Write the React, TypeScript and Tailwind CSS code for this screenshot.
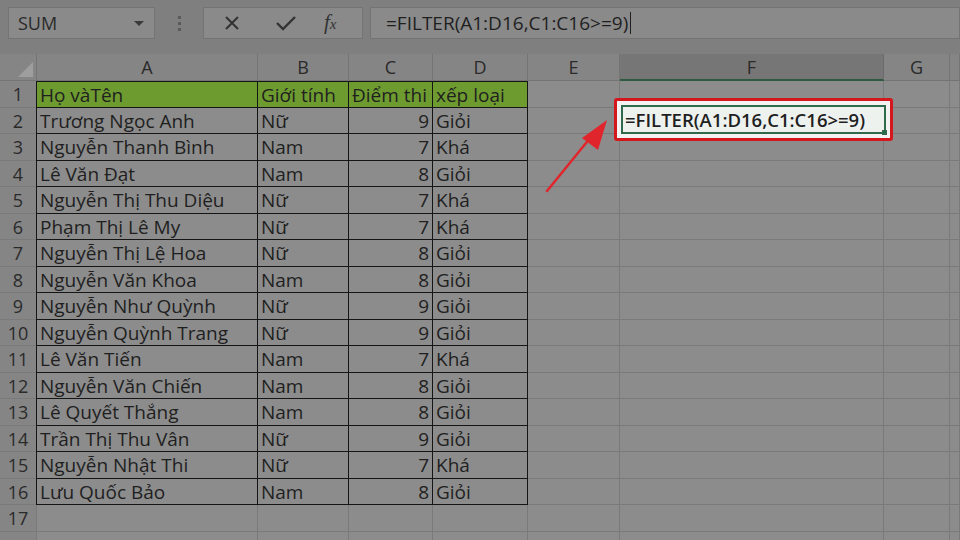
import React from 'react';

const rows = [
  ['Trương Ngọc Anh', 'Nữ', '9', 'Giỏi'],
  ['Nguyễn Thanh Bình', 'Nam', '7', 'Khá'],
  ['Lê Văn Đạt', 'Nam', '8', 'Giỏi'],
  ['Nguyễn Thị Thu Diệu', 'Nữ', '7', 'Khá'],
  ['Phạm Thị Lê My', 'Nữ', '7', 'Khá'],
  ['Nguyễn Thị Lệ Hoa', 'Nữ', '8', 'Giỏi'],
  ['Nguyễn Văn Khoa', 'Nam', '8', 'Giỏi'],
  ['Nguyễn Như Quỳnh', 'Nữ', '9', 'Giỏi'],
  ['Nguyễn Quỳnh Trang', 'Nữ', '9', 'Giỏi'],
  ['Lê Văn Tiến', 'Nam', '7', 'Khá'],
  ['Nguyễn Văn Chiến', 'Nam', '8', 'Giỏi'],
  ['Lê Quyết Thắng', 'Nam', '8', 'Giỏi'],
  ['Trần Thị Thu Vân', 'Nữ', '9', 'Giỏi'],
  ['Nguyễn Nhật Thi', 'Nữ', '7', 'Khá'],
  ['Lưu Quốc Bảo', 'Nam', '8', 'Giỏi'],
];

const header = ['Họ vàTên', 'Giới tính', 'Điểm thi', 'xếp loại'];
const letters = ['A', 'B', 'C', 'D', 'E', 'F', 'G', ''];
const cols = 'grid grid-cols-[37px_221px_91px_84px_95px_92px_264px_66px_1fr] grid-rows-[100%] leading-[22px]';

function Toolbar() {
  return (
    <div className="h-[54px] bg-[#7f7f7f] flex items-start pt-[7px] pl-[8px]">
      <div className="w-[147px] h-[32px] bg-[#8a8a8a] border border-[#747474] flex items-center justify-between pl-[9px] pr-[10px]">
        <span className="text-[18px] text-[#2a2a2a]">SUM</span>
        <span className="w-0 h-0 border-l-[5px] border-r-[5px] border-t-[5px] border-l-transparent border-r-transparent border-t-[#3a3a3a]" />
      </div>
      <div className="w-[48px] h-[32px] flex flex-col items-center justify-center gap-[3px]">
        <span className="w-[3px] h-[3px] bg-[#5a5a5a]" />
        <span className="w-[3px] h-[3px] bg-[#5a5a5a]" />
        <span className="w-[3px] h-[3px] bg-[#5a5a5a]" />
      </div>
      <div className="w-[160px] h-[32px] bg-[#8a8a8a] border border-[#747474] flex items-center">
        <svg className="ml-[19px]" width="18" height="18" viewBox="0 0 18 18">
          <path d="M3 3 L15 15 M15 3 L3 15" stroke="#333" strokeWidth="2" />
        </svg>
        <svg className="ml-[34px]" width="22" height="18" viewBox="0 0 22 18">
          <path d="M2 9 L8 15 L20 3" stroke="#333" strokeWidth="2.4" fill="none" />
        </svg>
        <span className="ml-[27px] text-[21px] italic text-[#333] font-['Liberation_Serif',serif]">
          f<span className="text-[15px]">x</span>
        </span>
      </div>
      <div className="ml-[7px] flex-1 h-[32px] bg-[#8a8a8a] border border-[#747474] flex items-center pl-[15px]">
        <span className="text-[19px] text-[#1f1f1f]">=FILTER(A1:D16,C1:C16&gt;=9)</span>
        <span className="ml-[2px] w-px h-[22px] bg-[#1f1f1f]" />
      </div>
    </div>
  );
}

function HeaderRow() {
  return (
    <div className={`${cols} h-[27px] bg-[#858585]`}>
      <div className="relative border-r border-b border-[#747474]">
        <svg className="absolute right-[3px] bottom-[3px]" width="15" height="15" viewBox="0 0 15 15">
          <path d="M15 0 L15 15 L0 15 Z" fill="#9e9e9e" />
        </svg>
      </div>
      {letters.map((l, i) => (
        <div
          key={i}
          className={
            l === 'F'
              ? 'flex items-center justify-center bg-[#767676] border-r border-[#6a6a6a] border-b-2 border-b-[#2e5a3f] text-[18px] text-[#2a2a2a]'
              : 'flex items-center justify-center border-r border-b border-[#747474] text-[18px] text-[#2a2a2a]'
          }
        >
          {l}
        </div>
      ))}
    </div>
  );
}

function Row({ n, data, head, tall }: { n?: number; data?: string[]; head?: boolean; tall?: boolean }) {
  const dark = 'border-r border-b border-[#151515]';
  const light = 'border-r border-b border-[#7a7a7a]';
  return (
    <div className={`${cols} ${tall ? 'h-[27px]' : 'h-[26px]'} text-[19px] text-[#1f1f1f]`}>
      <div className="flex items-center justify-center bg-[#858585] border-r border-b border-[#7a7a7a] text-[18px] text-[#2a2a2a]">
        {n}
      </div>
      {[0, 1, 2, 3].map((c) => (
        <div
          key={c}
          className={`${data ? dark : light} ${data && c === 0 ? 'border-l border-l-[#151515] -ml-px' : ''} ${
            head ? 'bg-[#6e9b30] border-t border-t-[#151515]' : 'bg-[#8c8c8c]'
          } flex items-center px-[3px] overflow-hidden whitespace-nowrap ${
            data && c === 2 && !head ? 'justify-end' : ''
          }`}
        >
          {data ? data[c] : ''}
        </div>
      ))}
      {[4, 5, 6, 7].map((c) => (
        <div key={c} className={`${light} bg-[#8c8c8c]`} />
      ))}
    </div>
  );
}

export default function App() {
  return (
    <div className="w-[960px] h-[540px] overflow-hidden bg-[#8c8c8c] font-['Open_Sans',sans-serif] relative">
      <Toolbar />
      <HeaderRow />
      <Row n={1} data={header} head tall />
      {rows.map((r, i) => (
        <Row key={i} n={i + 2} data={r} tall={i % 2 === 1} />
      ))}
      <Row n={17} tall />
      <Row />

      <div className="absolute left-[614px] top-[98px] w-[279px] h-[43px] border-[3px] border-[#d3171c] rounded-[3px] bg-[#f3f3f3] p-[4px]">
        <div className="relative w-full h-full border-2 border-[#2f6b4a] bg-[#eef2ef] flex items-center pl-[2px]">
          <span className="text-[18.5px] font-semibold text-[#1f1f1f]">=FILTER(A1:D16,C1:C16&gt;=9)</span>
          <span className="absolute right-[-3px] bottom-[-3px] w-[5px] h-[5px] bg-[#2f6b4a]" />
        </div>
      </div>

      <svg className="absolute left-[540px] top-[110px]" width="80" height="90" viewBox="0 0 80 90">
        <path d="M7 81 L55 22" stroke="#e0262c" strokeWidth="2.5" strokeLinecap="round" />
        <path d="M67 10 L42 28 L58 40 Z" fill="#e0262c" />
      </svg>
    </div>
  );
}
